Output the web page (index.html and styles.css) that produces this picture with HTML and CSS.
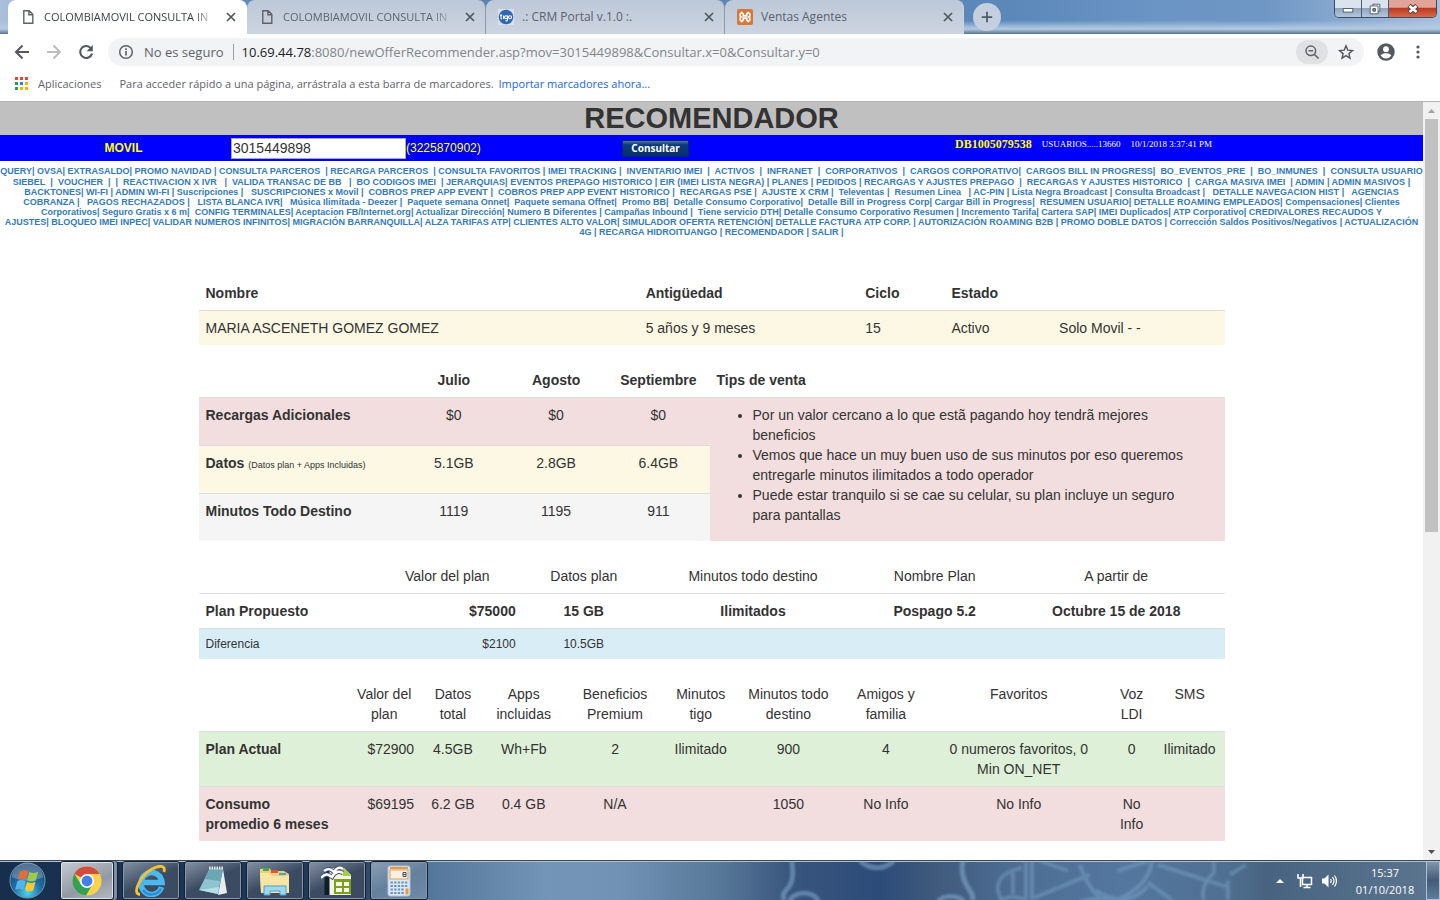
FILE: index.html
```html
<!DOCTYPE html>
<html lang="es">
<head>
<meta charset="utf-8">
<title>COLOMBIAMOVIL CONSULTA IN</title>
<link rel="stylesheet" href="styles.css">
</head>
<body>
<header class="tabstrip">
  <div class="tabs" role="tablist">
    <div class="tab tab-active" role="tab" aria-selected="true">
      <svg class="favicon" viewBox="0 0 16 16"><path d="M3.8 1.7h5.4l3.6 3.6v8.9h-9zM8.900 2v3.700h3.800" fill="none" stroke="#5f6368" stroke-width="1.400"/></svg>
      <span class="tab-title fade">COLOMBIAMOVIL CONSULTA IN</span>
      <button class="tab-close" aria-label="Cerrar"><svg viewBox="0 0 16 16"><path d="M4 4l8 8M12 4l-8 8"/></svg></button>
    </div>
    <div class="tab" role="tab">
      <svg class="favicon" viewBox="0 0 16 16"><path d="M3.8 1.7h5.4l3.6 3.6v8.9h-9zM8.900 2v3.700h3.800" fill="none" stroke="#5f6368" stroke-width="1.400"/></svg>
      <span class="tab-title fade">COLOMBIAMOVIL CONSULTA IN</span>
      <button class="tab-close" aria-label="Cerrar"><svg viewBox="0 0 16 16"><path d="M4 4l8 8M12 4l-8 8"/></svg></button>
    </div>
    <div class="tab" role="tab">
      <svg class="favicon" viewBox="0 0 16 16"><rect width="16" height="16" fill="#d9e0e9"/><circle cx="8" cy="8" r="7.300" fill="#2e68b2"/><g fill="none" stroke="#fff" stroke-width="1.100"><path d="M3 5v4.200q0 .8 1 .8M2 6.500h2M5.500 6.500V10"/><circle cx="8" cy="8.200" r="1.500"/><path d="M9.500 6.500V11q0 1-2 .8"/><circle cx="12" cy="8.200" r="1.500"/></g></svg>
      <span class="tab-title">.: CRM Portal v.1.0 :.</span>
      <button class="tab-close" aria-label="Cerrar"><svg viewBox="0 0 16 16"><path d="M4 4l8 8M12 4l-8 8"/></svg></button>
    </div>
    <div class="tab tab-last" role="tab">
      <svg class="favicon" viewBox="0 0 16 16"><rect width="16" height="16" rx="2" fill="#d97738"/><path d="M4.800 3.500L6.300 5v1.800h3.400V5l1.500-1.500L12.800 5v2L11.800 8l1 1v2l-1.600 1.500L9.700 11V9.200H6.300V11l-1.500 1.500L3.200 11V9l1-1-1-1V5z" fill="none" stroke="#fff" stroke-width="1.700"/></svg>
      <span class="tab-title">Ventas Agentes</span>
      <button class="tab-close" aria-label="Cerrar"><svg viewBox="0 0 16 16"><path d="M4 4l8 8M12 4l-8 8"/></svg></button>
    </div>
    <button class="new-tab" aria-label="Nueva pestaña"><svg viewBox="0 0 16 16"><path d="M8 2v12M2 8h12"/></svg></button>
  </div>
  <div class="window-buttons">
    <button class="win" aria-label="Minimizar"><svg viewBox="0 0 16 16"><rect x="2.500" y="7.500" width="11" height="4" fill="#fff" stroke="#4a5366"/></svg></button>
    <button class="win" aria-label="Restaurar"><svg viewBox="0 0 16 16"><path d="M5.500 2.500h8v8h-8z" fill="#fff" stroke="#4a5366"/><path d="M2.500 4.500h9v9h-9z" fill="#fff" stroke="#4a5366"/><path d="M5.500 7.500h3v3h-3z" fill="#7c8ba3" stroke="#4a5366"/></svg></button>
    <button class="win win-close" aria-label="Cerrar ventana"><svg viewBox="0 0 16 16"><path d="M3.500 4l9 8M12.500 4l-9 8" stroke="#594049" stroke-width="5.500"/><path d="M4 4.500l8 7M12 4.500l-8 7" stroke="#fff" stroke-width="3"/></svg></button>
  </div>
</header>

<nav class="toolbar" aria-label="Navegación">
  <button class="tool" aria-label="Atrás"><svg viewBox="0 0 16 16"><path d="M15 8H2.500M8.500 1.500L2 8l6.500 6.500" fill="none" stroke="#54585d" stroke-width="2"/></svg></button>
  <button class="tool" aria-label="Adelante"><svg viewBox="0 0 16 16"><path d="M1 8h12.500M7.500 1.500L14 8l-6.500 6.500" fill="none" stroke="#bcbec1" stroke-width="2"/></svg></button>
  <button class="tool" aria-label="Recargar"><svg viewBox="0 0 16 16"><path d="M13.200 4.600A6 6 0 1 0 14 9.600" fill="none" stroke="#54585d" stroke-width="2.100"/><path d="M14.800 1v6.200H8.600z" fill="#54585d"/></svg></button>
  <div class="omnibox">
    <svg class="info" viewBox="0 0 16 16"><circle cx="8" cy="8" r="6.300" fill="none" stroke="#5f6368" stroke-width="1.500"/><path d="M8 7v4.500M8 4.300v1.700" stroke="#5f6368" stroke-width="1.700"/></svg>
    <span class="insecure">No es seguro</span>
    <span class="url"><b>10.69.44.78</b>:8080/newOfferRecommender.asp?mov=3015449898&amp;Consultar.x=0&amp;Consultar.y=0</span>
    <button class="zoom-chip" aria-label="Zoom"><svg viewBox="0 0 16 16"><circle cx="6.800" cy="6.800" r="4.800" fill="none" stroke="#5f6368" stroke-width="1.500"/><path d="M4.500 6.800h4.600M10.300 10.300l4.200 4.200" stroke="#5f6368" stroke-width="1.600"/></svg></button>
    <button class="star" aria-label="Marcar"><svg viewBox="0 0 16 16"><path d="M8 1.800l1.800 4.300 4.700.4-3.600 3.100 1.100 4.600L8 11.700l-4 2.500 1.100-4.600L1.500 6.500l4.700-.4z" fill="none" stroke="#54585d" stroke-width="1.400"/></svg></button>
  </div>
  <button class="avatar" aria-label="Perfil"><svg viewBox="0 0 18 18"><circle cx="9" cy="9" r="8.700" fill="#54585f"/><circle cx="9" cy="6.200" r="2.900" fill="#fff"/><path d="M3.600 12.400C4.600 10.800 7 10.200 9 10.200s4.400.6 5.400 2.200A6.500 6.500 0 0 1 9 15.400a6.500 6.500 0 0 1-5.400-3z" fill="#fff"/></svg></button>
  <button class="tool" aria-label="Menú"><svg viewBox="0 0 16 16" fill="#54585d"><circle cx="8" cy="3" r="1.600"/><circle cx="8" cy="8" r="1.600"/><circle cx="8" cy="13" r="1.600"/></svg></button>
</nav>

<nav class="bookmarks" aria-label="Marcadores">
  <svg class="apps" viewBox="0 0 13 13"><path d="M0 0h3v3H0zM5 0h3v3H5zM10 0h3v3h-3z" fill="#ea4335"/><path d="M0 5h3v3H0zM0 10h3v3H0z" fill="#2f9e55"/><path d="M5 5h3v3H5z" fill="#1e88e5"/><path d="M10 5h3v3h-3zM5 10h3v3H5zM10 10h3v3h-3z" fill="#f4b400"/></svg>
  <a class="bookmark" href="#">Aplicaciones</a>
  <span class="hint">Para acceder rápido a una página, arrástrala a esta barra de marcadores.</span>
  <a class="import" href="#">Importar marcadores ahora...</a>
</nav>

<div class="viewport">
<main class="page">
  <h1 class="title">RECOMENDADOR</h1>
  <form class="query">
    <label class="movil" for="mov">MOVIL</label>
    <div class="number"><input id="mov" class="mov" type="text" value="3015449898"><span>(3225870902)</span></div>
    <div class="submit"><button class="consultar" type="button">Consultar</button></div>
    <div class="session"><b>DB1005079538</b><span>USUARIOS.....13660</span><span>10/1/2018 3:37:41 PM</span></div>
  </form>
  <nav class="menu" aria-label="Menú principal"></nav>

  <div class="content">
    <table class="grid client">
      <colgroup><col class="c1"><col class="c2"><col class="c3"><col class="c4"><col></colgroup>
      <thead><tr><th>Nombre</th><th>Antigüedad</th><th>Ciclo</th><th>Estado</th><th></th></tr></thead>
      <tbody><tr class="warning"><td>MARIA ASCENETH GOMEZ GOMEZ</td><td>5 años y 9 meses</td><td>15</td><td>Activo</td><td>Solo Movil - -</td></tr></tbody>
    </table>

    <table class="grid usage">
      <colgroup><col class="c1"><col class="c2"><col class="c2"><col class="c2"><col></colgroup>
      <thead><tr><th></th><th class="mid">Julio</th><th class="mid">Agosto</th><th class="mid">Septiembre</th><th>Tips de venta</th></tr></thead>
      <tbody>
        <tr class="danger"><th>Recargas Adicionales</th><td class="mid">$0</td><td class="mid">$0</td><td class="mid">$0</td>
          <td class="danger" rowspan="3"><ul class="tips"><li>Por un valor cercano a lo que estã pagando hoy tendrã mejores beneficios</li><li>Vemos que hace un muy buen uso de sus minutos por eso queremos entregarle minutos ilimitados a todo operador</li><li>Puede estar tranquilo si se cae su celular, su plan incluye un seguro para pantallas</li></ul></td></tr>
        <tr class="warning"><th>Datos <small>(Datos plan + Apps Incluidas)</small></th><td class="mid">5.1GB</td><td class="mid">2.8GB</td><td class="mid">6.4GB</td></tr>
        <tr class="active"><th>Minutos Todo Destino</th><td class="mid">1119</td><td class="mid">1195</td><td class="mid">911</td></tr>
      </tbody>
    </table>

    <table class="grid offer">
      <colgroup><col class="c1"><col class="c2"><col class="c3"><col class="c4"><col class="c5"><col></colgroup>
      <thead><tr><td></td><td class="mid">Valor del plan</td><td class="mid">Datos plan</td><td class="mid">Minutos todo destino</td><td class="mid">Nombre Plan</td><td class="mid">A partir de</td></tr></thead>
      <tbody>
        <tr><th>Plan Propuesto</th><th class="end">$75000</th><th class="mid">15 GB</th><th class="mid">Ilimitados</th><th class="mid">Pospago 5.2</th><th class="mid">Octubre 15 de 2018</th></tr>
        <tr class="info-row"><td>Diferencia</td><td class="end">$2100</td><td class="mid">10.5GB</td><td></td><td></td><td></td></tr>
      </tbody>
    </table>

    <table class="grid plan">
      <colgroup><col class="c1"><col class="c2"><col class="c3"><col class="c4"><col class="c5"><col class="c6"><col class="c7"><col class="c8"><col class="c9"><col class="c10"><col></colgroup>
      <thead><tr><td></td><td class="mid">Valor del plan</td><td class="mid">Datos total</td><td class="mid">Apps incluidas</td><td class="mid">Beneficios Premium</td><td class="mid">Minutos tigo</td><td class="mid">Minutos todo destino</td><td class="mid">Amigos y familia</td><td class="mid">Favoritos</td><td class="mid">Voz LDI</td><td class="mid">SMS</td></tr></thead>
      <tbody>
        <tr class="success"><th>Plan Actual</th><td class="end">$72900</td><td class="mid">4.5GB</td><td class="mid">Wh+Fb</td><td class="mid">2</td><td class="mid">Ilimitado</td><td class="mid">900</td><td class="mid">4</td><td class="mid">0 numeros favoritos, 0<br>Min ON_NET</td><td class="mid">0</td><td class="mid">Ilimitado</td></tr>
        <tr class="danger"><th>Consumo<br>promedio 6 meses</th><td class="end">$69195</td><td class="mid">6.2 GB</td><td class="mid">0.4 GB</td><td class="mid">N/A</td><td></td><td class="mid">1050</td><td class="mid">No Info</td><td class="mid">No Info</td><td class="mid">No Info</td><td></td></tr>
      </tbody>
    </table>
  </div>
</main>
<div class="scrollbar" aria-hidden="true">
  <svg class="arrow" viewBox="0 0 17 17"><path d="M5 11h7L8.500 7z" fill="#a3a3a3"/></svg>
  <div class="track"><div class="thumb"></div></div>
  <svg class="arrow" viewBox="0 0 17 17"><path d="M5 7h7l-3.500 4z" fill="#505050"/></svg>
</div>
</div>

<footer class="taskbar">
  <svg class="aero" viewBox="0 0 520 40" preserveAspectRatio="none" aria-hidden="true"><defs><filter id="soft"><feGaussianBlur stdDeviation="1"/></filter></defs><g filter="url(#soft)" fill="none" stroke="#8db4d8" stroke-opacity=".5" stroke-width="5"><path d="M52 0c1 14 2 22-6 30q-5 5-1 10M50 42a14 9 0 0 1 28 0M120 0q17 14 34 0M223 0c-3 14 2 24 8 32q3 4 1 8M198 42a14 9 0 0 1 26 0"/><g stroke-width="4" stroke-opacity=".35"><path d="M262 40c-10-16 0-26 10-30l10-3M273 12v22M286 0v40M292 0v40M300 0l28 10M294 38l56-24M340 4q6 20 20 34M356 30q30 20 52-4M412 0q-2 24-34 40M378 10l30-10M408 22l24 18M418 4l68 22M474 0v12q-14 14-10 28M490 14l16-10M488 20v20M260 42a14 8 0 0 1 26 0M340 42a30 9 0 0 1 48 0"/></g></g></svg>
  <button class="start" aria-label="Inicio"><svg viewBox="0 0 40 40"><defs><radialGradient id="orb" cx=".5" cy=".85" r=".9"><stop offset="0" stop-color="#4fd0f0"/><stop offset=".45" stop-color="#1d6ea6"/><stop offset="1" stop-color="#16395f"/></radialGradient></defs><circle cx="20" cy="20" r="18" fill="url(#orb)" stroke="#7396b2"/><path d="M4 17a16 15 0 0 1 32 0q-16 6-32 0z" fill="#fff" opacity=".25"/><path d="M12.500 11q4-3 8-.5L18.500 19q-4-2-8.500 0z" fill="#ee6a35"/><path d="M21.800 11.300q4 2 9 0L28.500 20q-4 2-8.700 0z" fill="#9dcc4a"/><path d="M9.500 20.500q4-2 8.600 0L16 29.500q-4-2-8.500 0z" fill="#57b4e8"/><path d="M19.500 21.500q4 2 8.600 0l-2.100 8.500q-4 2.500-8.700 0z" fill="#fbc934"/></svg></button>
  <div class="apps-row">
    <button class="app app-on" aria-label="Chrome"><svg viewBox="0 0 32 32"><circle cx="16" cy="16" r="14.500" fill="#fcd24d"/><path d="M16 16L3.400 8.700A14.500 14.500 0 0 1 28.600 9H16z" fill="#d34b3d"/><path d="M3.400 8.700A14.500 14.500 0 0 0 15 30.500l6.500-11L16 16l-6 3.500z" fill="#33a056"/><circle cx="16" cy="16" r="7" fill="#fff"/><circle cx="16" cy="16" r="5.400" fill="#4080e8"/></svg></button>
    <button class="app" aria-label="Internet Explorer"><svg viewBox="0 0 32 32"><path d="M26.500 22A10.500 11 0 1 1 27 17.500H9" fill="none" stroke="#4bb8ee" stroke-width="5.600"/><path d="M26 23.500A10.500 10.500 0 0 1 8 25" fill="none" stroke="#2a8fd6" stroke-width="2.500"/><path d="M5 29.500C-4 29 6 10 17 4c7-4 14-4 12 3" fill="none" stroke="#f5c332" stroke-width="2.800"/></svg></button>
    <button class="app" aria-label="Bloc de notas"><svg viewBox="0 0 32 32"><path d="M26 4l4 24-9 2z" fill="#e8eef0"/><path d="M13 3h13l-5 26-19-4z" fill="#8fc3d0"/><path d="M13 3h13l-3 13-15-2z" fill="#6ba6b5"/><path d="M2 25l20-3-1 7z" fill="#b5dde6"/><path d="M12 3h15" stroke="#e5e5e5" stroke-width="3" stroke-dasharray="1.500 1"/></svg></button>
    <button class="app" aria-label="Explorador"><svg viewBox="0 0 32 32"><path d="M1 8V4l9-1 3 3h12l5 3v19H2z" fill="#ecd07a"/><path d="M4 3h6v3H4z" fill="#3fae4a"/><path d="M12 5h7v3h-7z" fill="#df5634"/><path d="M20 8h7v2h-7z" fill="#4f9bd4"/><path d="M1 8h9l3 3h17v17H2z" fill="#f6e5a5"/><path d="M5 30v-9h22v9h-6v-4h-10v4z" fill="#9ed7f2" stroke="#539dc6"/></svg></button>
    <button class="app" aria-label="OpenOffice Calc"><svg viewBox="0 0 32 32"><path d="M8 3h15l7 7v20H8z" fill="#f2f5e4"/><path d="M6 3v27" stroke="#101c28" stroke-width="5"/><path d="M22 2l8 9h-8z" fill="#a8cc3c"/><path d="M0 13c5-6 8-3 11-1 3-6 7-6 11-4M3 6c5-4 8-1 10 1 3-5 6-5 9-3" fill="none" stroke="#42536a" stroke-width="4.500"/><path d="M0 13c5-6 8-3 11-1 3-6 7-6 11-4M3 6c5-4 8-1 10 1 3-5 6-5 9-3" fill="none" stroke="#fff" stroke-width="2.500"/><path d="M13 14h17v15H13z" fill="#7aa01c"/><path d="M15 17h6v4h-6zM23 17h5v4h-5zM15 23h6v4h-6zM23 23h5v4h-5z" fill="#f8fbe9"/></svg></button>
    <button class="app app-light" aria-label="Calculadora"><svg viewBox="0 0 32 32"><rect x="5" y="1" width="22" height="30" rx="2" fill="#dce9f4" stroke="#b0c4d8"/><rect x="7" y="2" width="18" height="2" fill="#ee9838"/><rect x="7" y="5" width="18" height="9" fill="#f8efe2" stroke="#d8a060"/><path d="M20 7.500h3v4h-3zM20 9.500h3" fill="none" stroke="#39506b"/><g stroke="#6f95bb" stroke-width="2.200" stroke-dasharray="2.400 1.200"><path d="M7.500 17.500h18M7.500 21h18M7.500 24.500h14M7.500 28h14"/></g><path d="M22.500 23.500h3v6h-3z" fill="#ee9838"/></svg></button>
  </div>
  <div class="tray">
    <svg class="tray-up" viewBox="0 0 10 10"><path d="M1 7h8L5 3z" fill="#fff"/></svg>
    <svg class="tray-icon" viewBox="0 0 16 16"><path d="M5.500 4.500h9v7h-9zM10 12v2.500M6.500 14.500h7" fill="#4b6583" stroke="#fff" stroke-width="1.500"/><path d="M1 1v4h5V1M3.500 5v9" fill="none" stroke="#fff" stroke-width="1.600"/></svg>
    <svg class="tray-icon" viewBox="0 0 16 16"><path d="M1 5.500h2.500L7.500 1.500v13l-4-4H1z" fill="#fff"/><path d="M9.500 6q1.500 2 0 4M11.500 4q3 4 0 8M13.500 2.500q4 5.500 0 11" fill="none" stroke="#fff" stroke-width="1.200"/></svg>
    <div class="clock"><span>15:37</span><span>01/10/2018</span></div>
    <button class="show-desktop" aria-label="Mostrar escritorio"></button>
  </div>
</footer>
<script src="menu.js"></script>
</body>
</html>
```
FILE: menu.js
```js
// Menu rows; "|" separates entries and "~" is a fixed space.
const rows = [
  "QUERY| OVSA| EXTRASALDO| PROMO NAVIDAD | CONSULTA PARCEROS~ | RECARGA PARCEROS~ | CONSULTA FAVORITOS | IMEI TRACKING |~ INVENTARIO IMEI~ |~ ACTIVOS~ |~ INFRANET~ |~ CORPORATIVOS~ |~ CARGOS CORPORATIVO|~ CARGOS BILL IN PROGRESS|~ BO_EVENTOS_PRE~ |~ BO_INMUNES~ |~ CONSULTA USUARIO",
  "SIEBEL~ |~ VOUCHER~ |~ |~ REACTIVACION X IVR~~ |~ VALIDA TRANSAC DE BB~~ |~ BO CODIGOS IMEI~ | JERARQUIAS| EVENTOS PREPAGO HISTORICO | EIR (IMEI LISTA NEGRA) | PLANES | PEDIDOS | RECARGAS Y AJUSTES PREPAGO~ |~ RECARGAS Y AJUSTES HISTORICO~ |~ CARGA MASIVA IMEI~ | ADMIN | ADMIN MASIVOS |",
  "BACKTONES| WI-FI | ADMIN WI-FI | Suscripciones |~~ SUSCRIPCIONES x Movil |~ COBROS PREP APP EVENT |~ COBROS PREP APP EVENT HISTORICO |~ RECARGAS PSE |~ AJUSTE X CRM |~ Televentas |~ Resumen Linea~~ | AC-PIN | Lista Negra Broadcast | Consulta Broadcast |~~ DETALLE NAVEGACION HIST |~~ AGENCIAS",
  "COBRANZA |~~ PAGOS RECHAZADOS |~~ LISTA BLANCA IVR|~~ Música Ilimitada - Deezer |~ Paquete semana Onnet|~ Paquete semana Offnet|~ Promo BB|~ Detalle Consumo Corporativo|~ Detalle Bill in Progress Corp| Cargar Bill in Progress|~ RESUMEN USUARIO| DETALLE ROAMING EMPLEADOS| Compensaciones| Clientes",
  "Corporativos| Seguro Gratis x 6 m|~ CONFIG TERMINALES| Aceptacion FB/Internet.org| Actualizar Dirección| Numero B Diferentes | Campañas Inbound |~ Tiene servicio DTH| Detalle Consumo Corporativo Resumen | Incremento Tarifa| Cartera SAP| IMEI Duplicados| ATP Corporativo| CREDIVALORES RECAUDOS Y",
  "AJUSTES| BLOQUEO IMEI INPEC| VALIDAR NUMEROS INFINITOS| MIGRACIÓN BARRANQUILLA| ALZA TARIFAS ATP| CLIENTES ALTO VALOR| SIMULADOR OFERTA RETENCIÓN| DETALLE FACTURA ATP CORP. | AUTORIZACIÓN ROAMING B2B | PROMO DOBLE DATOS | Corrección Saldos Positivos/Negativos | ACTUALIZACIÓN",
  "4G | RECARGA HIDROITUANGO | RECOMENDADOR | SALIR |"
];
const menu = document.querySelector(".menu");
rows.forEach(row => {
  const line = document.createElement("div");
  line.className = "menu-row";
  row.split("|").forEach((entry, i) => {
    if (i) line.append("|");
    const text = entry.replace(/~/g, "\u00a0");
    const name = text.trim();
    if (!name) { line.append(text); return; }
    const at = text.indexOf(name);
    const link = document.createElement("a");
    link.href = "#";
    link.textContent = name;
    line.append(text.slice(0, at), link, text.slice(at + name.length));
  });
  menu.append(line);
});
```
FILE: styles.css
```css
* { box-sizing: border-box; }
body { margin: 0; height: 100vh; display: flex; flex-direction: column; overflow: hidden; background: #fff; color: #333; font: 14px/20px "Liberation Sans", Arial, sans-serif; }
button { padding: 0; border: 0; background: none; font: inherit; color: inherit; display: flex; align-items: center; justify-content: center; }
a { color: inherit; text-decoration: none; }
svg { display: block; flex: none; }

.tabstrip { flex: none; height: 34px; display: flex; justify-content: space-between; align-items: flex-start; padding: 0 3px 0 8px; background: linear-gradient(180deg, transparent 60%, #b4cbe3 85%, #56728f 100%), linear-gradient(90deg, #a9bfdc 0, #5482b4 20%, #5b88b9 70%, #6a94c4 80%, #6f97c5 88%, #a9c0dc 100%); font: 12px/16px "Open Sans", "Noto Sans", sans-serif; }
.tabs { display: flex; align-self: stretch; align-items: center; }
.tab { width: 239px; height: 34px; display: flex; align-items: center; gap: 8px; padding: 0 7px 0 12px; background: linear-gradient(#bdc8d8, #ccd4e0); border-radius: 8px 8px 0 0; color: #5a6370; border-right: 1px solid #8d9aac; }
.tab-active { background: #fff; color: #3c4043; border-right-color: #fff; }
.tab-last { border-right-color: #ccd4e0; }
.favicon, .tab-close svg { width: 16px; height: 16px; }
.tab-title { flex: 1; white-space: nowrap; }
.fade { font-size: 11px; -webkit-mask-image: linear-gradient(90deg, #000 88%, transparent); mask-image: linear-gradient(90deg, #000 88%, transparent); }
.tab-close svg { fill: none; stroke: #50565e; stroke-width: 1.700; }
.new-tab { width: 28px; height: 28px; margin-left: 9px; border-radius: 50%; background: #c3cfde; }
.new-tab svg { width: 14px; height: 14px; stroke: #505b69; stroke-width: 2; }
.window-buttons { display: flex; height: 18px; border: 1px solid #3d4c66; border-top: 0; border-radius: 0 0 5px 5px; overflow: hidden; }
.win { width: 27px; background: linear-gradient(#dbe4ee 0 45%, #8fa6c0 50%, #b4c6d9); border-right: 1px solid #4c5c76; }
.win svg { width: 14px; height: 14px; }
.win-close { width: 47px; border: 0; background: linear-gradient(#e2a498 0 42%, #bb3a20 50%, #d66a4a); }

.toolbar { flex: none; height: 36px; display: flex; align-items: center; padding: 0 6px; font: 13px/20px "Open Sans", "Noto Sans", sans-serif; }
.tool { width: 32px; height: 32px; }
.tool svg, .info, .star svg, .zoom-chip svg { width: 16px; height: 16px; }
.omnibox { flex: 1; min-width: 0; height: 28px; margin-left: 6px; padding: 0 8px 0 10px; display: flex; align-items: center; border-radius: 14px; background: #f1f3f4; color: #80868b; }
.insecure { margin: 0 9px 0 10px; color: #5f6368; font-size: 13px; white-space: nowrap; }
.url { flex: 1; white-space: nowrap; border-left: 1px solid #9aa0a6; line-height: 16px; padding-left: 8px; }
.url b { font-weight: normal; color: #202124; }
.zoom-chip { width: 32px; height: 24px; margin-right: 8px; border-radius: 12px; background: #dfe1e3; }
.star { width: 20px; }
.avatar { width: 38px; padding-left: 6px; }
.avatar svg { width: 18px; height: 18px; }
.bookmarks { flex: none; height: 32px; display: flex; align-items: center; padding: 0 15px 4px; border-bottom: 1px solid #b4b4b4; font: 11px/16px "Open Sans", "Noto Sans", sans-serif; color: #5f6368; white-space: nowrap; }
.apps { width: 13px; height: 13px; margin-right: 10px; }
.hint { margin: 0 5px 0 18px; }
.import { color: #1a66d6; }

.viewport { flex: 1; min-height: 0; display: flex; }
.page { flex: 1; min-width: 0; overflow: hidden; }
.scrollbar { width: 17px; display: flex; flex-direction: column; background: #f1f1f1; }
.arrow { width: 17px; height: 17px; }
.track { flex: 1; padding: 0 2px; }
.thumb { height: 57%; background: #c1c1c1; }

.title { margin: 0; background: #c0c0c0; font-size: 29px; line-height: 33px; text-align: center; }
.query { display: grid; grid-template-columns: 231fr 391fr 333fr 468fr; height: 26px; margin: 0; background: #00f; color: #ff0; font-size: 12px; line-height: 26px; }
.movil { font-weight: bold; text-align: center; padding-left: 16px; }
.number { display: flex; align-items: center; }
.mov { width: 175px; height: 21px; padding: 0 1px; border: 1px solid #a9a9a9; background: #fff; color: #333; font: 14px/18px "Liberation Sans", Arial, sans-serif; }
.submit { display: flex; align-items: center; }
.consultar { width: 67px; height: 17px; background: linear-gradient(#4a78b4, #0b3a7a 25%, #06306c); border: 1px solid #0a2858; border-radius: 1px; color: #fff; font: bold 10px/12px "Noto Sans", sans-serif; }
.session { display: flex; gap: 10px; font: 9px/18px "Liberation Serif", "Times New Roman", serif; color: #ffc; }
.session b { font-size: 12px; color: #ff0; }
.menu { padding-top: 5px; text-align: center; color: #337ab7; font-size: 9px; font-weight: bold; line-height: 10px; }
.menu-row { white-space: nowrap; }
.menu-row:first-child { line-height: 11px; }

.content { width: 92%; max-width: 1026px; margin: 0 auto; padding-top: 39px; }
.grid { width: 100%; margin-bottom: 18px; border-collapse: separate; border-spacing: 0; table-layout: fixed; }
.grid th, .grid td { padding: 7px; vertical-align: top; text-align: left; }
.grid tbody th, .grid tbody td { border-top: 1px solid #ddd; }
.grid .mid { text-align: center; }
.grid .end { text-align: right; }
.grid small { font-size: 9px; font-weight: normal; }
.warning { background: #fcf8e3; }
.danger { background: #f2dede; }
.active { background: #f5f5f5; }
.success { background: #dff0d8; }
.info-row { background: #d9edf7; font-size: 12px; line-height: 16px; }
.client .c1 { width: 42.900%; }
.client .c2 { width: 21.400%; }
.client .c3 { width: 8.400%; }
.client .c4 { width: 10.500%; }
.usage .c1 { width: 19.900%; }
.usage .c2 { width: 9.970%; }
.usage tbody tr { height: 48px; }
.tips { margin: 0; padding: 0 20px 0 36px; }
.offer .c1 { width: 16.900%; }
.offer .c2 { width: 14.700%; }
.offer .c3 { width: 11.900%; }
.offer .c4 { width: 21.100%; }
.offer .c5 { width: 14.300%; }
.plan .c1 { width: 14.500%; }
.plan .c2 { width: 7.200%; }
.plan .c3 { width: 6.200%; }
.plan .c4 { width: 7.600%; }
.plan .c5 { width: 10.200%; }
.plan .c6 { width: 6.500%; }
.plan .c7 { width: 10.600%; }
.plan .c8 { width: 8.400%; }
.plan .c9 { width: 17.500%; }
.plan .c10 { width: 4.500%; }

.taskbar { position: relative; flex: none; height: 40px; display: flex; align-items: stretch; border-top: 1px solid #3c4a50; box-shadow: inset 0 1px #a9c2d8; background: linear-gradient(90deg, #172f4c 0, #203b5b 24%, #54779b 30%, #7395b8 38%, #7192b4 43%, #587899 50%, #38557d 55%, #2c4b78 61%, #3f5a7c 65%, #4c6c92 70%, #54779f 78%, #4f7092 85%, #486380 88%, #5c7690 100%); }
.aero { position: absolute; left: 51.400%; top: 0; width: 36.100%; height: 100%; }
.start { width: 54px; }
.start svg { width: 39px; height: 39px; }
.apps-row { display: flex; gap: 4px; padding-left: 6px; }
.app { width: 58px; border: 1px solid #17222f; border-radius: 3px; box-shadow: inset 0 0 0 1px #8496ab; background: linear-gradient(155deg, #8592a4, #3b4b62 50%, #3a4a60); }
.app svg { width: 32px; height: 32px; }
.app-on { width: 54px; margin-right: 4px; background: linear-gradient(155deg, #c5cbd3, #9199a4 60%, #b5bbc3); box-shadow: inset 0 0 0 1px #dde2e8, 3px 0 #7f8fa3, 4px 0 #17222f; }
.app-light { background: linear-gradient(155deg, #8a9fb5, #65809c 50%, #6e8ba8); }
.tray { margin-left: auto; display: flex; align-items: center; color: #fff; z-index: 1; }
.tray-up { width: 10px; height: 10px; margin-right: 12px; }
.tray-icon { width: 16px; height: 16px; margin-right: 8px; }
.clock { width: 80px; margin-right: 1px; display: flex; flex-direction: column; text-align: center; font: 11px/17px "Open Sans", "Noto Sans", sans-serif; }
.show-desktop { width: 14px; align-self: stretch; border: 1px solid #b0c4d8; background: linear-gradient(#8296ab, #435b76 50%, #5f7d9c); }
```
